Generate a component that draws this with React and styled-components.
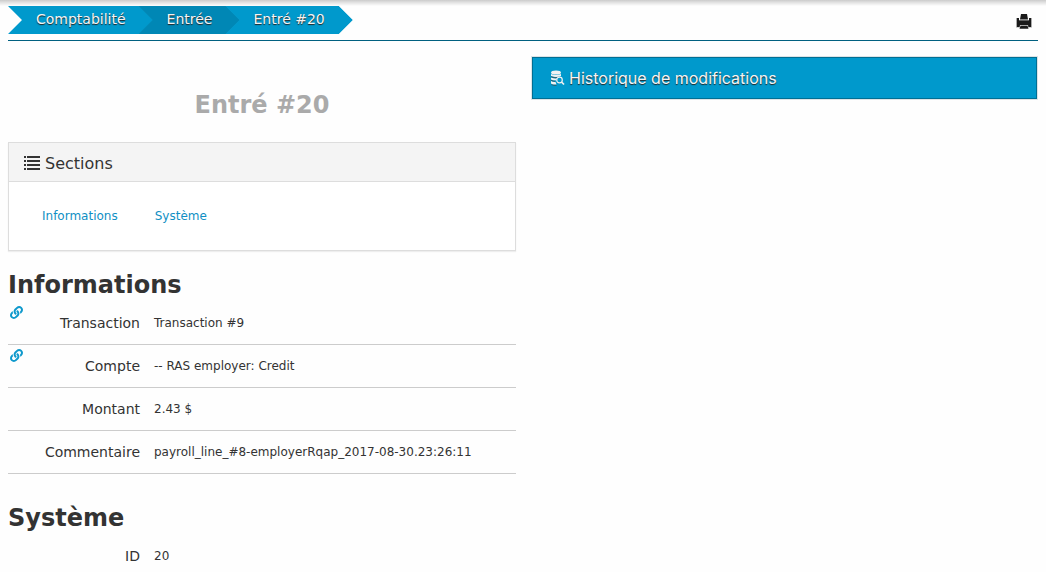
import React from "react";
import styled, { createGlobalStyle } from "styled-components";
import { FaLink } from "react-icons/fa";

const GlobalStyle = createGlobalStyle`
  * { box-sizing: border-box; }
  body {
    margin: 0;
    background: #fefefe;
    color: #333;
    font-family: Verdana, "DejaVu Sans", sans-serif;
    font-size: 12px;
  }
  h1, h2, h3, ol, ul, dl, dd { margin: 0; padding: 0; }
  ol, ul { list-style: none; }
`;

const Page = styled.div`
  padding: 0 8px;
  background: linear-gradient(#cbcbcb 0, #dedede 2px, #fefefe 6px);
`;

const TopBar = styled.header`
  display: flex;
  justify-content: space-between;
  align-items: flex-start;
  height: 41px;
  padding-top: 6px;
  border-bottom: 1px solid #006080;
`;

const Crumbs = styled.ol`
  display: flex;
`;

const Crumb = styled.li`
  height: 28px;
  padding: 0 28px;
  background: ${(p) => (p.$dark ? "#0087b5" : "#0099cc")};
  clip-path: polygon(0 0, calc(100% - 14px) 0, 100% 50%, calc(100% - 14px) 100%, 0 100%, 14px 50%);
  & + & { margin-left: -15px; }
`;

const CrumbLink = styled.a`
  color: #f4f4f4;
  font-size: 14px;
  line-height: 27px;
  text-decoration: none;
  text-shadow: 0 1px 1px #222;
`;

const PrintButton = styled.button`
  display: flex;
  margin: 7px 6px 0 0;
  padding: 0;
  border: 0;
  background: none;
`;

const Columns = styled.div`
  display: grid;
  grid-template-columns: 1fr 1fr;
  gap: 14px;
  align-items: start;
  padding-top: 16px;
`;

const Aside = styled.aside`
  padding: 0 1px 0 2px;
`;

const HistoryButton = styled.button`
  display: flex;
  align-items: center;
  gap: 4px;
  width: 100%;
  height: 42px;
  padding: 0 17px;
  border: 1px solid #006f94;
  background: #0099cc;
  box-shadow: 0 0 0 1px #dde3e5;
  color: #f4f4f4;
  font-family: Inter, sans-serif;
  font-size: 16px;
  text-align: left;
  text-shadow: 0 1px 1px #222;
`;

const Title = styled.h1`
  padding: 32px 0 21px;
  color: #aaa;
  font-size: 24px;
  line-height: 32px;
  text-align: center;
`;

const Panel = styled.nav`
  border: 1px solid #ddd;
  background: #fff;
  box-shadow: 0 1px 1px #eee;
`;

const PanelTitle = styled.h3`
  display: flex;
  align-items: center;
  gap: 4px;
  height: 39px;
  padding: 2px 15px 0;
  border-bottom: 1px solid #ddd;
  background: #f4f4f4;
  font-size: 16px;
  font-weight: normal;
`;

const PanelLinks = styled.ul`
  display: flex;
  gap: 37px;
  padding: 25px 33px 24px;
  line-height: 19px;
`;

const PanelLink = styled.a`
  color: #0f8fc4;
  text-decoration: none;
`;

const Section = styled.section`
  padding-top: 18px;
  & + & { padding-top: 28px; }
`;

const SectionTitle = styled.h2`
  padding-bottom: 1px;
  font-size: 24px;
  line-height: 32px;
`;

const Field = styled.div`
  display: grid;
  grid-template-columns: 132px 1fr;
  column-gap: 14px;
  position: relative;
  height: 43px;
  line-height: 43px;
  border-bottom: ${(p) => (p.$last ? "0" : "1px solid #ccc")};
`;

const Label = styled.dt`
  font-size: 14px;
  text-align: right;
`;

const Value = styled.dd`
  white-space: nowrap;
`;

const FieldLink = styled.a`
  position: absolute;
  top: 4px;
  left: 2px;
  display: flex;
  color: #0f99cc;
`;

function PrintIcon() {
  return (
    <svg width="16" height="16" viewBox="0 0 16 16" aria-hidden="true">
      <path d="M0 5h3v2h10V5h3v9.500h-4v-2H4v2H0z" fill="#aaa" />
      <path d="M5 1h6l1 5.500H4z" fill="#1a1a1a" />
      <path d="M1 5h2v2.600h10V5h2v9h-2.500L12 12H4l-.5 2H1z" fill="#1a1a1a" />
      <path d="M4.500 12.800h7l1 3h-9z" fill="#1a1a1a" />
    </svg>
  );
}

function ListIcon() {
  return (
    <svg width="17" height="15" viewBox="0 0 17 15" fill="#333" aria-hidden="true">
      {[0, 4, 8, 12].map((y) => (
        <path key={y} d={`M0 ${y}h2v2H0zM3 ${y}h13v2H3z`} />
      ))}
    </svg>
  );
}

function HistoryIcon() {
  return (
    <svg width="15" height="16" viewBox="0 0 15 16" aria-hidden="true">
      <g fill="#f1f1f1">
        <ellipse cx="6" cy="2.500" rx="5" ry="2" />
        <path d="M1 4q5 2.200 10 0v2q-5 2-10 0zM1 7.400q3 1.300 6 1L5.500 10.500Q3 10.500 1 9.500zM1 11q2 1 4.500.9L6.500 14.500Q3 15 1 13.400z" />
      </g>
      <path d="M1 6.800q4 1.600 8 .5M1 10.400q2 1 4 .8M1.500 14.600q2 1 5 .8" stroke="#444" strokeWidth=".7" fill="none" />
      <circle cx="9.500" cy="10" r="2.800" fill="#0099cc" stroke="#f1f1f1" strokeWidth="1.200" />
      <path d="m11.500 12 2.500 2.500" stroke="#f1f1f1" strokeWidth="1.700" />
    </svg>
  );
}

const crumbs = ["Comptabilité", "Entrée", "Entré #20"];

const sections = [
  {
    id: "informations",
    title: "Informations",
    fields: [
      { label: "Transaction", value: "Transaction #9", linked: true },
      { label: "Compte", value: "-- RAS employer: Credit", linked: true },
      { label: "Montant", value: "2.43 $" },
      { label: "Commentaire", value: "payroll_line_#8-employerRqap_2017-08-30.23:26:11" },
    ],
  },
  { id: "systeme", title: "Système", fields: [{ label: "ID", value: "20", last: true }] },
];

export default function App() {
  return (
    <>
      <GlobalStyle />
      <Page>
        <TopBar>
          <nav aria-label="Navigation">
            <Crumbs>
              {crumbs.map((name, i) => (
                <Crumb key={name} $dark={i === 1}>
                  <CrumbLink href="#">{name}</CrumbLink>
                </Crumb>
              ))}
            </Crumbs>
          </nav>
          <PrintButton type="button" aria-label="Imprimer">
            <PrintIcon />
          </PrintButton>
        </TopBar>
        <Columns>
          <main>
            <Title>Entré #20</Title>
            <Panel>
              <PanelTitle>
                <ListIcon />
                Sections
              </PanelTitle>
              <PanelLinks>
                {sections.map((s) => (
                  <li key={s.id}>
                    <PanelLink href={`#${s.id}`}>{s.title}</PanelLink>
                  </li>
                ))}
              </PanelLinks>
            </Panel>
            {sections.map((s) => (
              <Section key={s.id} id={s.id}>
                <SectionTitle>{s.title}</SectionTitle>
                <dl>
                  {s.fields.map((f) => (
                    <Field key={f.label} $last={f.last}>
                      <Label>{f.label}</Label>
                      <Value>{f.value}</Value>
                      {f.linked && (
                        <FieldLink href="#" aria-label={f.value}>
                          <FaLink size={13} />
                        </FieldLink>
                      )}
                    </Field>
                  ))}
                </dl>
              </Section>
            ))}
          </main>
          <Aside>
            <HistoryButton type="button">
              <HistoryIcon />
              Historique de modifications
            </HistoryButton>
          </Aside>
        </Columns>
      </Page>
    </>
  );
}
